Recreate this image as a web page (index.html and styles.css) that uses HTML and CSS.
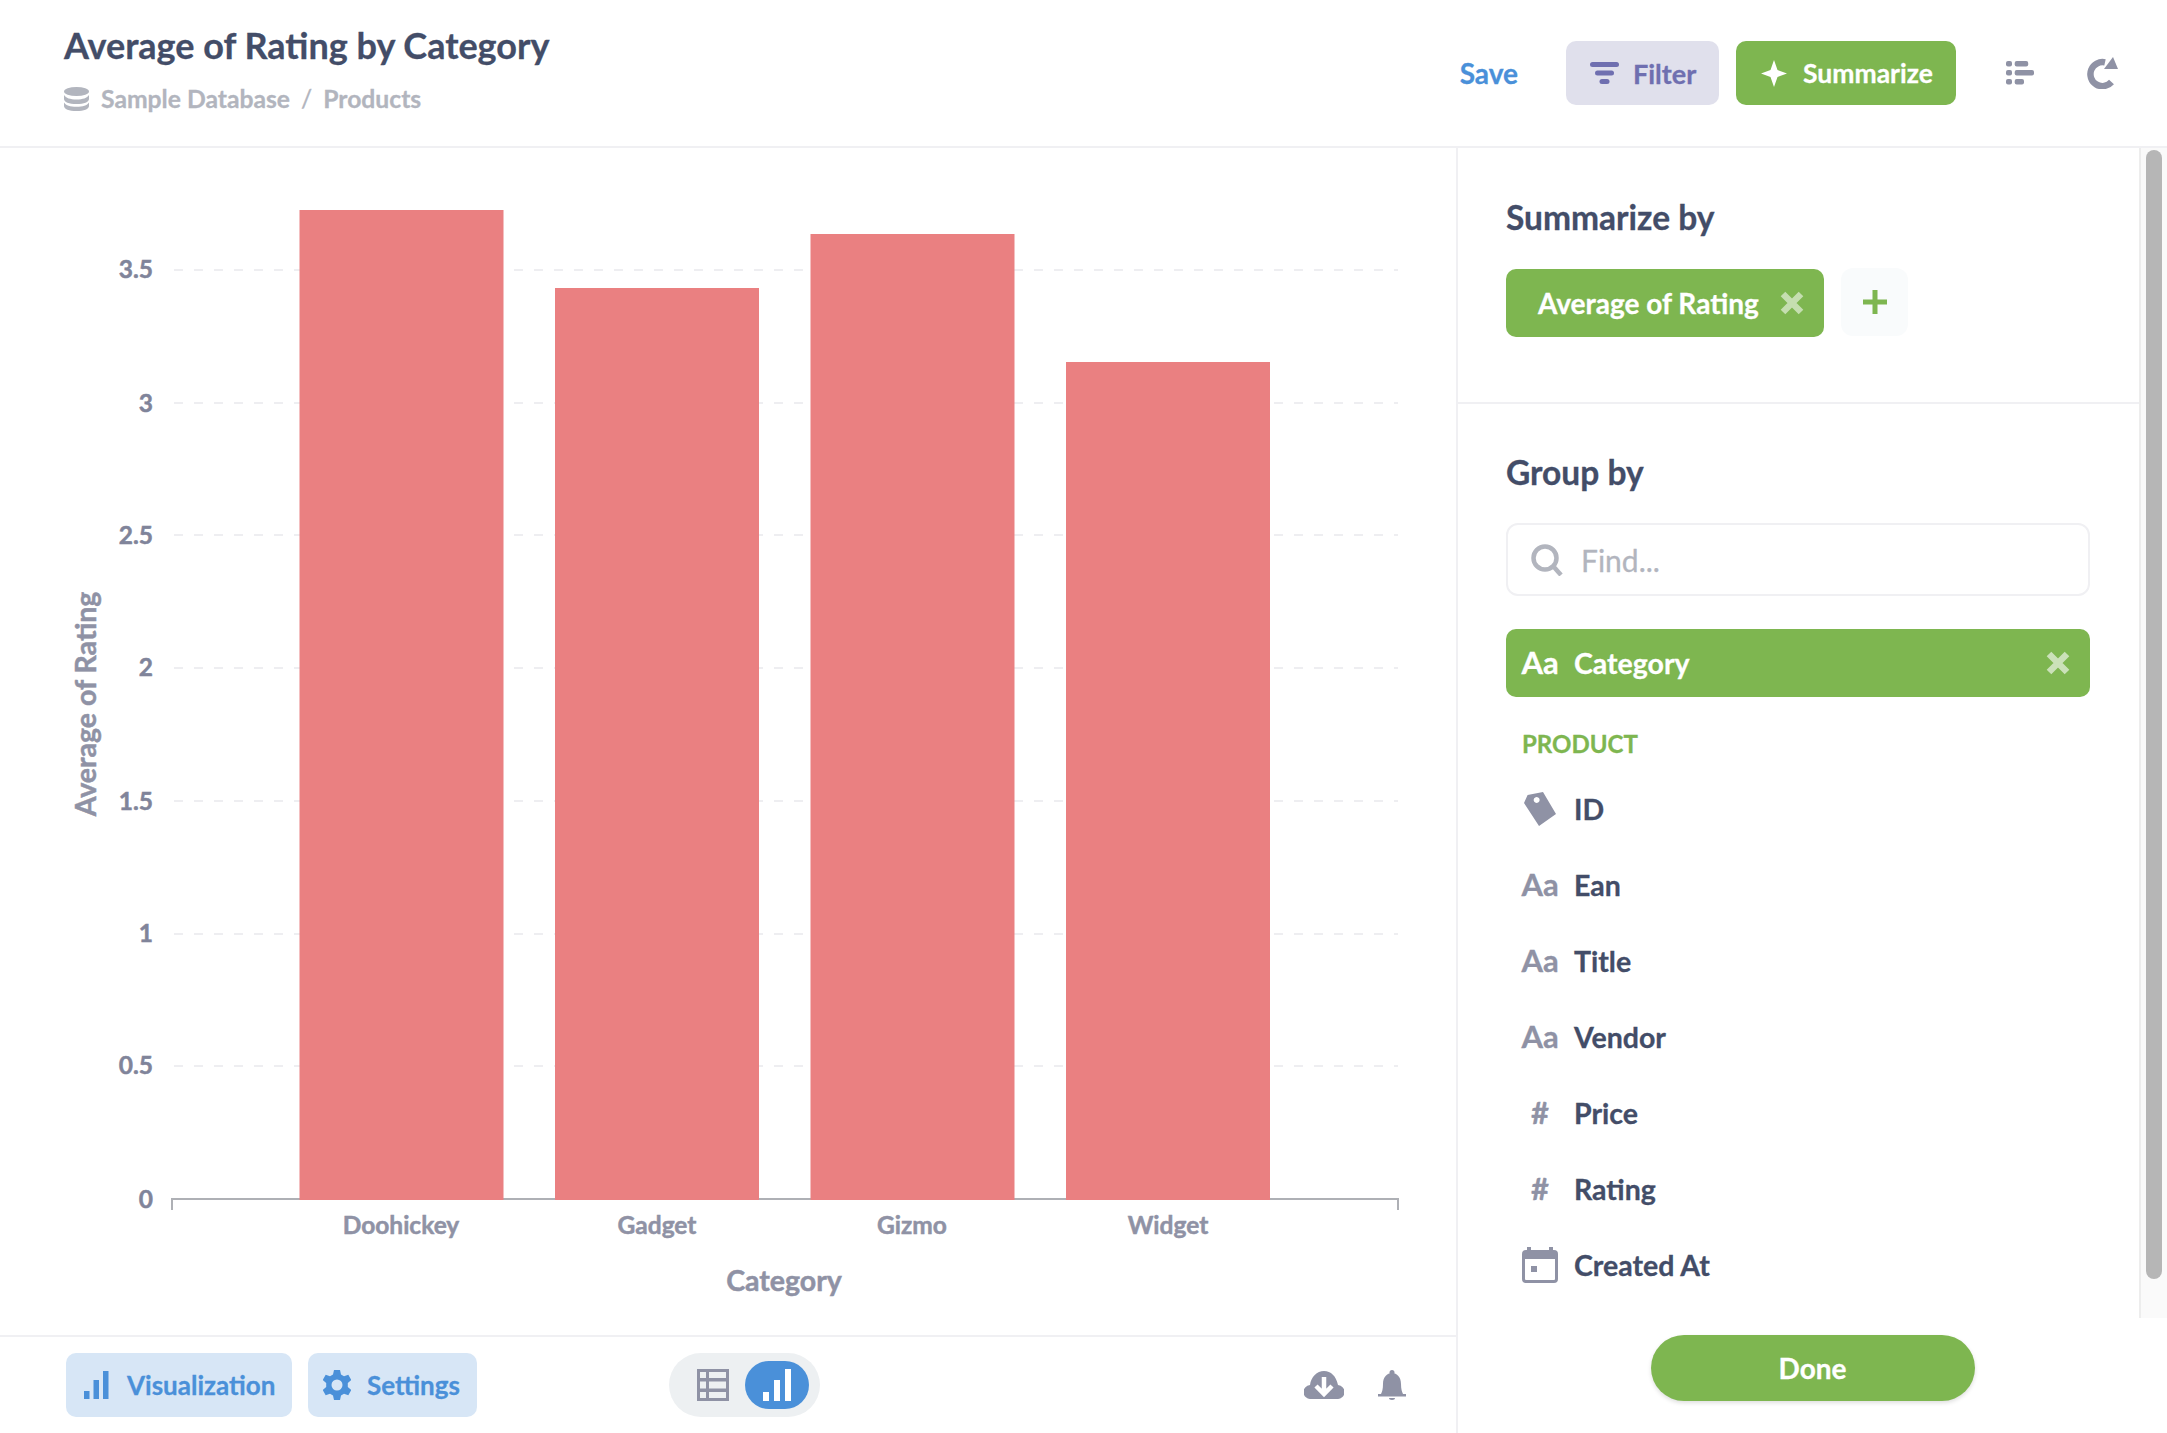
FILE: index.html
```html
<!DOCTYPE html>
<html lang="en">
<head>
    <meta charset="UTF-8">
    <title>Average of Rating by Category</title>
    <link rel="stylesheet" href="styles.css">
</head>
<body>
    <header class="top-bar">
        <div class="title-block">
            <h1 class="page-title">Average of Rating by Category</h1>
            <div class="crumbs">
                <svg class="db-icon" viewBox="0 0 25 24"><ellipse cx="12.500" cy="4.500" rx="12.500" ry="4.500"/><path d="M0 8c2 3 6 4.500 12.500 4.500S23 11 25 8v4c0 3-5 5-12.500 5S0 15 0 12z"/><path d="M0 15.500c2 3 6 4.200 12.500 4.200S23 18.500 25 15.500V19c0 3-5 5-12.500 5S0 22 0 19z"/></svg>
                <span>Sample Database</span>
                <span class="crumb-sep">/</span>
                <span>Products</span>
            </div>
        </div>
        <div class="top-actions">
            <a class="save-link">Save</a>
            <button class="btn btn-filter">
                <svg class="filter-icon" viewBox="0 0 29 22"><rect width="29" height="5" rx="2.500"/><rect x="5" y="8.500" width="19" height="5" rx="2.500"/><rect x="9.500" y="17" width="10" height="5" rx="2.500"/></svg>
                Filter
            </button>
            <button class="btn btn-summarize">
                <svg class="spark-icon" viewBox="0 0 26 27"><path d="M13 0l3.500 10L26 13.500 16.500 17 13 27 9.500 17 0 13.500 9.500 10z"/></svg>
                Summarize
            </button>
            <svg class="list-icon" viewBox="0 0 28 24"><rect width="6" height="5.500" rx="2"/><rect x="8.700" width="13.500" height="5.500" rx="2"/><rect y="9" width="6" height="5.500" rx="2"/><rect x="8.700" y="9" width="19.300" height="5.500" rx="2"/><rect y="18" width="6" height="5.500" rx="2"/><rect x="8.700" y="18" width="9.300" height="5.500" rx="2"/></svg>
            <svg class="refresh-icon" viewBox="0 0 31 32"><path class="refresh-arc" d="M18 5.400A12 12 0 1 0 24.500 25"/><path d="M26 0l5 12H17z"/></svg>
        </div>
    </header>

    <div class="workspace">
        <section class="chart-column">
            <div class="chart-area">
                <svg class="chart" viewBox="0 148 1456 1187">
                    <g class="grid">
                        <line x1="174" x2="1398" y1="270" y2="270"/>
                        <line x1="174" x2="1398" y1="403" y2="403"/>
                        <line x1="174" x2="1398" y1="535" y2="535"/>
                        <line x1="174" x2="1398" y1="668" y2="668"/>
                        <line x1="174" x2="1398" y1="801" y2="801"/>
                        <line x1="174" x2="1398" y1="934" y2="934"/>
                        <line x1="174" x2="1398" y1="1066" y2="1066"/>
                    </g>
                    <path class="axis" d="M172 1210V1199H1398V1210"/>
                    <g class="bars">
                        <rect x="299.500" y="210" width="204" height="990"/>
                        <rect x="555" y="288" width="204" height="912"/>
                        <rect x="810.500" y="234" width="204" height="966"/>
                        <rect x="1066" y="362" width="204" height="838"/>
                    </g>
                    <g class="y-ticks">
                        <text x="153" y="278">3.5</text>
                        <text x="153" y="412">3</text>
                        <text x="153" y="544">2.5</text>
                        <text x="153" y="676">2</text>
                        <text x="153" y="810">1.5</text>
                        <text x="153" y="942">1</text>
                        <text x="153" y="1074">0.5</text>
                        <text x="153" y="1208">0</text>
                    </g>
                    <g class="x-ticks">
                        <text x="401" y="1234">Doohickey</text>
                        <text x="657" y="1234">Gadget</text>
                        <text x="912" y="1234">Gizmo</text>
                        <text x="1168" y="1234">Widget</text>
                    </g>
                    <text class="axis-title" x="784" y="1291">Category</text>
                    <text class="axis-title" transform="translate(96 704) rotate(-90)">Average of Rating</text>
                </svg>
            </div>
            <footer class="chart-footer">
                <button class="btn btn-soft btn-viz">
                    <svg class="bars-icon" viewBox="0 0 25 28"><rect y="20" width="5.500" height="8"/><rect x="9.500" y="9" width="5.500" height="19"/><rect x="19" width="5.500" height="28"/></svg>
                    Visualization
                </button>
                <button class="btn btn-soft btn-settings">
                    <svg class="gear-icon" viewBox="0 0 28 30"><path d="M11 0h6l1 4.500 3 1.700 4.300-1.400 3 5.200L24.800 13v4l3.500 3-3 5.200-4.300-1.400-3 1.700-1 4.500h-6l-1-4.500-3-1.700-4.300 1.400-3-5.200L3.200 17v-4L-.3 10l3-5.200 4.300 1.400 3-1.700zM14 9.500a5.500 5.500 0 1 0 0 11 5.500 5.500 0 0 0 0-11z" fill-rule="evenodd"/></svg>
                    Settings
                </button>
                <div class="view-toggle">
                    <svg class="table-icon" viewBox="0 0 32 32"><path fill-rule="evenodd" d="M0 0h32v32H0zM3 3v6h6V3zm9 0v6h17V3zM3 12.500v7h6v-7zm9 0v7h17v-7zM3 23v6h6v-6zm9 0v6h17v-6z"/></svg>
                    <span class="toggle-on">
                        <svg class="toggle-bars" viewBox="0 0 28 32"><rect y="23" width="6" height="9"/><rect x="11" y="11" width="6" height="21"/><rect x="22" width="6" height="32"/></svg>
                    </span>
                </div>
                <div class="footer-right">
                    <svg class="cloud-icon" viewBox="0 0 40 28"><path d="M7 28a7 7 0 0 1-1-14C7 6 13 0 20 0s12 5 14 14a7 7 0 0 1-1 14z"/><path d="M20 6v15M12 15l8 8 8-8" fill="none" stroke="#fff" stroke-width="4.500"/></svg>
                    <svg class="bell-icon" viewBox="0 0 28 30"><circle cx="14" cy="2.500" r="2.500"/><path d="M3 24c1-2 2-5 2-10C5 7 9 3 14 3s9 4 9 11c0 5 1 8 2 10h3v2.500H0V24z"/><path d="M11 28h6c0 1-1 2-3 2s-3-1-3-2z"/></svg>
                </div>
            </footer>
        </section>

        <aside class="sidebar">
            <div class="side-scroll">
                <div class="side-content">
                    <div class="side-section summarize-section">
                        <h2 class="side-heading">Summarize by</h2>
                        <div class="chip-row">
                            <div class="chip">
                                <span>Average of Rating</span>
                                <svg class="x-icon" viewBox="0 0 24 24"><path d="M3 3l18 18M21 3L3 21"/></svg>
                            </div>
                            <div class="add-btn">
                                <svg class="plus-icon" viewBox="0 0 24 24"><path d="M12 0v24M0 12h24"/></svg>
                            </div>
                        </div>
                    </div>
                    <div class="side-section group-section">
                        <h2 class="side-heading">Group by</h2>
                        <div class="search-box">
                            <svg class="search-icon" viewBox="0 0 32 32"><circle cx="14" cy="14" r="11.500"/><path d="M22 22l8 9"/></svg>
                            <span>Find...</span>
                        </div>
                        <div class="field-row field-selected">
                            <span class="field-icon">Aa</span>
                            <span class="field-name">Category</span>
                            <svg class="x-icon" viewBox="0 0 24 24"><path d="M3 3l18 18M21 3L3 21"/></svg>
                        </div>
                        <div class="table-label">PRODUCT</div>
                        <div class="field-row">
                            <span class="field-icon">
                                <svg class="tag-icon" viewBox="0 0 32 34"><path fill-rule="evenodd" d="M3.600 3L19 0l13 22-17 12L0 11zM12.600 5a3 3 0 1 0 .1 0z"/></svg>
                            </span>
                            <span class="field-name">ID</span>
                        </div>
                        <div class="field-row"><span class="field-icon">Aa</span><span class="field-name">Ean</span></div>
                        <div class="field-row"><span class="field-icon">Aa</span><span class="field-name">Title</span></div>
                        <div class="field-row"><span class="field-icon">Aa</span><span class="field-name">Vendor</span></div>
                        <div class="field-row"><span class="field-icon">#</span><span class="field-name">Price</span></div>
                        <div class="field-row"><span class="field-icon">#</span><span class="field-name">Rating</span></div>
                        <div class="field-row">
                            <span class="field-icon">
                                <svg class="cal-icon" viewBox="0 0 36 36"><path fill-rule="evenodd" d="M4 3h1V0h4v3h18V0h4v3h1a4 4 0 0 1 4 4v25a4 4 0 0 1-4 4H4a4 4 0 0 1-4-4V7a4 4 0 0 1 4-4zM3 12v20a1 1 0 0 0 1 1h28a1 1 0 0 0 1-1V12zM9 19h6v6H9z"/></svg>
                            </span>
                            <span class="field-name">Created At</span>
                        </div>
                    </div>
                </div>
                <div class="scroll-track"><div class="scroll-thumb"></div></div>
            </div>
            <div class="side-footer">
                <button class="done-btn">Done</button>
            </div>
        </aside>
    </div>
</body>
</html>
```

FILE: styles.css
```css
* {
    box-sizing: border-box;
}

body {
    margin: 0;
    height: 100vh;
    overflow: hidden;
    display: flex;
    flex-direction: column;
    font-family: 'Lato', 'Open Sans', sans-serif;
    color: #434d68;
    background: #fff;
    -webkit-text-stroke: 0.3px;
}

svg {
    display: block;
    flex: none;
}

button {
    font-family: inherit;
    border: none;
}

/* top bar */
.top-bar {
    height: 148px;
    flex: none;
    display: flex;
    justify-content: space-between;
    padding: 0 49px 0 64px;
    border-bottom: 2px solid #f0f0f3;
}

.page-title {
    margin: 23px 0 0;
    font-size: 36px;
    line-height: 44px;
    font-weight: 700;
}

.crumbs {
    display: flex;
    align-items: center;
    margin-top: 17px;
    font-size: 24.700px;
    line-height: 30px;
    font-weight: 700;
    color: #b2b5be;
}

.db-icon {
    width: 25px;
    height: 24px;
    margin-right: 12px;
    fill: #b2b5be;
}

.crumb-sep {
    margin: 0 11px;
    font-weight: 400;
}

.top-actions {
    display: flex;
    align-items: center;
}

.save-link {
    font-size: 28px;
    font-weight: 700;
    color: #4a90d9;
    margin-right: 48px;
}

.btn {
    height: 64px;
    display: flex;
    align-items: center;
    border-radius: 10px;
    font-size: 27px;
    font-weight: 700;
}

.btn-filter {
    width: 153px;
    padding-left: 24px;
    background: #e0e0ec;
    color: #6f6fb0;
    margin-right: 17px;
}

.filter-icon {
    width: 29px;
    height: 22px;
    margin-right: 14px;
    fill: #6f6fb0;
}

.btn-summarize {
    width: 220px;
    padding-left: 25px;
    background: #7eb650;
    color: #fff;
    font-size: 26.500px;
}

.spark-icon {
    width: 26px;
    height: 27px;
    margin-right: 16px;
    fill: #fff;
}

.list-icon {
    width: 28px;
    height: 24px;
    margin-left: 50px;
    fill: #8f92a5;
}

.refresh-icon {
    width: 31px;
    height: 32px;
    margin-left: 53px;
    fill: #8f92a5;
}

.refresh-arc {
    fill: none;
    stroke: #8f92a5;
    stroke-width: 6.500;
}

/* main area */
.workspace {
    flex: 1;
    display: flex;
    min-height: 0;
}

.chart-column {
    width: 1458px;
    flex: none;
    display: flex;
    flex-direction: column;
    border-right: 2px solid #f0f0f3;
}

.chart-area {
    height: 1187px;
    flex: none;
}

.chart {
    width: 1456px;
    height: 1187px;
}

.grid line {
    stroke: #eeeef1;
    stroke-width: 2;
    stroke-dasharray: 9 11;
}

.axis {
    fill: none;
    stroke: #aeb0b5;
    stroke-width: 2;
}

.bars rect {
    fill: #ea8081;
}

.y-ticks text,
.x-ticks text {
    font-size: 24.500px;
    font-weight: 700;
    fill: #8f92a5;
    stroke: #8f92a5;
    stroke-width: 0.5;
}

.y-ticks text {
    text-anchor: end;
    fill: #80849a;
    stroke: #80849a;
}

.x-ticks text {
    text-anchor: middle;
}

.axis-title {
    font-size: 28.500px;
    font-weight: 700;
    fill: #8f92a5;
    stroke: #8f92a5;
    stroke-width: 0.5;
    text-anchor: middle;
}

.chart-footer {
    flex: 1;
    display: flex;
    align-items: center;
    padding: 0 50px 0 66px;
    border-top: 2px solid #f0f0f3;
}

.btn-soft {
    padding-left: 18px;
    background: #d7e6f6;
    color: #4a90d9;
    font-size: 26px;
}

.btn-viz {
    width: 226px;
}

.bars-icon {
    width: 25px;
    height: 28px;
    margin-right: 18px;
    fill: #4a90d9;
}

.btn-settings {
    width: 169px;
    margin-left: 16px;
    padding-left: 15px;
}

.gear-icon {
    width: 28px;
    height: 30px;
    margin-right: 16px;
    fill: #4a90d9;
}

.view-toggle {
    width: 151px;
    height: 64px;
    margin-left: 192px;
    display: flex;
    align-items: center;
    padding-left: 28px;
    border-radius: 32px;
    background: #edf0f2;
}

.table-icon {
    width: 32px;
    height: 32px;
    fill: #8f92a5;
}

.toggle-on {
    width: 64px;
    height: 48px;
    margin-left: 16px;
    display: flex;
    align-items: center;
    justify-content: center;
    border-radius: 24px;
    background: #4a90d9;
}

.toggle-bars {
    width: 28px;
    height: 32px;
    fill: #fff;
}

.footer-right {
    margin-left: auto;
    display: flex;
    align-items: center;
    gap: 34px;
}

.cloud-icon {
    width: 40px;
    height: 28px;
    fill: #8f92a5;
}

.bell-icon {
    width: 28px;
    height: 30px;
    fill: #8f92a5;
}

/* sidebar */
.sidebar {
    flex: 1;
    min-width: 0;
    display: flex;
    flex-direction: column;
}

.side-scroll {
    height: 1170px;
    flex: none;
    display: flex;
    overflow: hidden;
}

.side-content {
    flex: 1;
    min-width: 0;
}

.side-section {
    padding: 0 49px 0 48px;
}

.summarize-section {
    height: 256px;
    padding-top: 49px;
    border-bottom: 2px solid #f0f0f3;
}

.group-section {
    padding-top: 48px;
}

.side-heading {
    margin: 0;
    font-size: 33.500px;
    line-height: 40px;
    font-weight: 700;
}

.chip-row {
    display: flex;
    margin-top: 32px;
}

.chip {
    width: 318px;
    height: 68px;
    display: flex;
    align-items: center;
    justify-content: space-between;
    padding: 0 20px 0 32px;
    border-radius: 10px;
    background: #7eb650;
    color: #fff;
    font-size: 28px;
    font-weight: 700;
}

.x-icon {
    width: 24px;
    height: 24px;
    fill: none;
    stroke: #fff;
    stroke-width: 6.500;
    opacity: 0.55;
}

.add-btn {
    width: 67px;
    height: 68px;
    margin: -1px 0 0 17px;
    display: flex;
    align-items: center;
    justify-content: center;
    border-radius: 12px;
    background: #f9fbfc;
}

.plus-icon {
    width: 24px;
    height: 24px;
    fill: none;
    stroke: #7eb650;
    stroke-width: 5;
}

.search-box {
    height: 73px;
    margin-top: 31px;
    display: flex;
    align-items: center;
    gap: 18px;
    padding-left: 23px;
    border: 2px solid #f0f0f3;
    border-radius: 12px;
    font-size: 30px;
    color: #b2b5be;
}

.search-icon {
    width: 32px;
    height: 32px;
    fill: none;
    stroke: #b2b5be;
    stroke-width: 4.500;
}

.field-row {
    height: 76px;
    display: flex;
    align-items: center;
    padding: 0 20px 0 16px;
    font-size: 28.500px;
    font-weight: 700;
}

.field-icon {
    width: 36px;
    margin: 0 16px 3px 0;
    display: flex;
    justify-content: center;
    font-size: 31px;
    color: #8f92a5;
}

.field-selected {
    height: 68px;
    margin-top: 33px;
    border-radius: 10px;
    background: #7eb650;
    color: #fff;
}

.field-selected .field-icon {
    color: #fff;
}

.field-selected .x-icon {
    margin-left: auto;
    opacity: 0.6;
}

.table-label {
    margin: 32px 0 12px;
    padding-left: 16px;
    font-size: 24px;
    line-height: 30px;
    font-weight: 700;
    color: #7eb650;
}

.tag-icon {
    width: 32px;
    height: 34px;
    margin-top: 3px;
    fill: #8f92a5;
}

.cal-icon {
    width: 36px;
    height: 36px;
    margin-top: 3px;
    fill: #8f92a5;
}

.scroll-track {
    width: 28px;
    flex: none;
    padding: 2px 5px 0;
    border-left: 2px solid #ededed;
    background: #fafafa;
}

.scroll-thumb {
    height: 1129px;
    border-radius: 8px;
    background: #b6b6b6;
}

.side-footer {
    flex: 1;
    display: flex;
    justify-content: center;
    padding-top: 17px;
}

.done-btn {
    width: 324px;
    height: 66px;
    border-radius: 33px;
    background: #7eb650;
    color: #fff;
    font-size: 28px;
    font-weight: 700;
    box-shadow: 0 2px 4px rgba(0, 0, 0, 0.13);
}
```
